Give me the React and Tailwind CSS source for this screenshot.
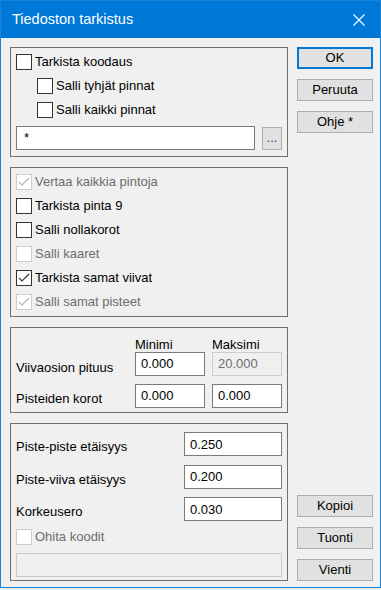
import React from "react";

function Box({ checked, disabled }) {
  return (
    <div
      className={
        "w-[16px] h-[16px] shrink-0 border bg-white flex items-center justify-center " +
        (disabled ? "border-[#cccccc]" : "border-[#333333]")
      }
    >
      {checked && (
        <svg width="14" height="14" viewBox="0 0 14 14">
          <polyline
            points="2,7 5,10 12,3"
            fill="none"
            stroke={disabled ? "#b5b5b5" : "#333333"}
            strokeWidth="1.1"
          />
        </svg>
      )}
    </div>
  );
}

function Check({ label, checked, disabled, indent }) {
  return (
    <div className={"flex items-center h-[24px] " + (indent ? "pl-[21px]" : "")}>
      <Box checked={checked} disabled={disabled} />
      <span className={"ml-[3px] " + (disabled ? "text-[#6d6d6d]" : "text-black")}>{label}</span>
    </div>
  );
}

function Field({ value, className, disabled }) {
  return (
    <div
      className={
        "h-[24px] border flex items-center pl-[5px] " +
        (disabled ? "border-[#cccccc] bg-[#f0f0f0] text-[#6d6d6d] " : "border-[#7a7a7a] bg-white text-black ") +
        (className || "")
      }
    >
      {value}
    </div>
  );
}

function Btn({ label, primary }) {
  return (
    <div
      className={
        "w-[76px] h-[22px] flex items-center justify-center bg-[#e1e1e1] " +
        (primary ? "border-2 border-[#0078d7]" : "border border-[#adadad]")
      }
    >
      {label}
    </div>
  );
}

export default function App() {
  return (
    <div className="w-[381px] h-[590px] bg-[#f0f0f0] font-['Liberation_Sans',sans-serif] text-[13px] text-black">
      <div className="w-[381px] h-[588px] border border-[#1883d7] flex flex-col">
        <div className="h-[37px] bg-[#0078d7] flex items-center justify-between pl-[11px] pr-[15px] shrink-0">
          <span className="text-white text-[14.5px]">Tiedoston tarkistus</span>
          <svg width="12" height="12" viewBox="0 0 12 12">
            <path d="M0.5 0.5L11.5 11.5M11.5 0.5L0.5 11.5" stroke="white" strokeWidth="1.1" />
          </svg>
        </div>

        <div className="flex-1 bg-[#f0f0f0] flex pt-[9px] pl-[9px] pr-[8px] pb-[6px] gap-[9px]">
          <div className="w-[278px] flex flex-col gap-[10px]">
            <div className="border border-[#6e6e6e] px-[5px] pt-[2px] pb-[6px]">
              <Check label="Tarkista koodaus" />
              <Check label="Salli tyhjät pinnat" indent />
              <Check label="Salli kaikki pinnat" indent />
              <div className="flex items-start mt-[4px] gap-[7px]">
                <Field value={<span className="pl-[2px]">*</span>} className="flex-1" />
                <div className="w-[20px] h-[23px] mt-px bg-[#e1e1e1] border border-[#adadad] flex items-center justify-center text-[#1b3f8b] leading-none pb-[2px]">
                  ...
                </div>
              </div>
            </div>

            <div className="border border-[#6e6e6e] px-[5px] pt-[2px] pb-[2px]">
              <Check label="Vertaa kaikkia pintoja" checked disabled />
              <Check label="Tarkista pinta 9" />
              <Check label="Salli nollakorot" />
              <Check label="Salli kaaret" disabled />
              <Check label="Tarkista samat viivat" checked />
              <Check label="Salli samat pisteet" checked disabled />
            </div>

            <div className="border border-[#6e6e6e] px-[5px] pt-[10px] pb-[4px]">
              <div className="grid grid-cols-[119px_70px_77px]">
                <div className="h-[14px]"></div>
                <div className="h-[14px] leading-[14px]">Minimi</div>
                <div className="h-[14px] leading-[14px] pl-[7px]">Maksimi</div>
                <div className="h-[24px] flex items-center pt-[7px]">Viivaosion pituus</div>
                <Field value="0.000" />
                <Field value="20.000" disabled className="ml-[7px]" />
                <div className="h-[24px] mt-[8px] flex items-center pt-[5px]">Pisteiden korot</div>
                <Field value="0.000" className="mt-[8px]" />
                <Field value="0.000" className="mt-[8px] ml-[7px]" />
              </div>
            </div>

            <div className="flex-1 border border-[#6e6e6e] px-[5px] pt-[8px]">
              <div className="flex flex-col gap-[8px]">
                <div className="flex items-center justify-between">
                  <span className="pt-[5px]">Piste-piste etäisyys</span>
                  <Field value="0.250" className="w-[98px]" />
                </div>
                <div className="flex items-center justify-between">
                  <span className="pt-[5px]">Piste-viiva etäisyys</span>
                  <Field value="0.200" className="w-[98px]" />
                </div>
                <div className="flex items-center justify-between">
                  <span className="pt-[5px]">Korkeusero</span>
                  <Field value="0.030" className="w-[98px]" />
                </div>
              </div>
              <div className="mt-[3px]">
                <Check label="Ohita koodit" disabled />
              </div>
              <Field value="" disabled className="mt-[4px]" />
            </div>
          </div>

          <div className="flex flex-col justify-between">
            <div className="flex flex-col gap-[10px]">
              <Btn label="OK" primary />
              <Btn label="Peruuta" />
              <Btn label="Ohje *" />
            </div>
            <div className="flex flex-col gap-[10px]">
              <Btn label="Kopioi" />
              <Btn label="Tuonti" />
              <Btn label="Vienti" />
            </div>
          </div>
        </div>
      </div>
    </div>
  );
}
